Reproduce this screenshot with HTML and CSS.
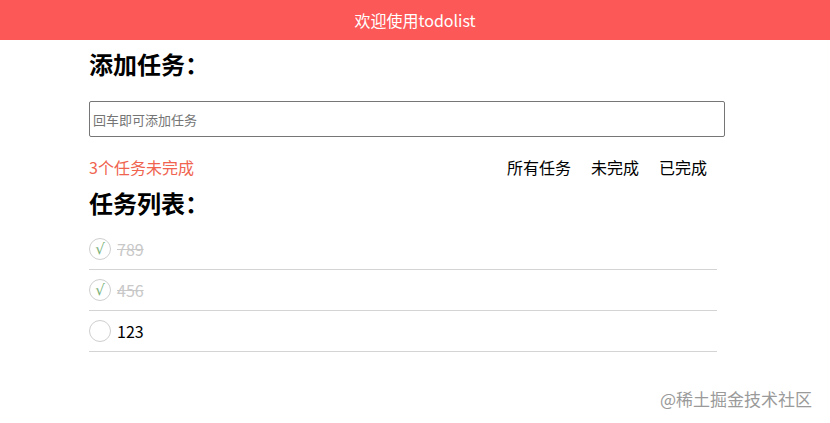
FILE: index.html
```html
<!DOCTYPE html>
<html lang="zh">
<head>
<meta charset="utf-8">
<link rel="stylesheet" href="styles.css">
</head>
<body>
<header class="topbar">欢迎使用todolist</header>
<main class="wrap">
  <h2 class="title title-add">添加任务：</h2>
  <input class="task-input" type="text" placeholder="回车即可添加任务">
  <div class="status">
    <span class="remain">3个任务未完成</span>
    <nav class="filters">
      <span class="filter">所有任务</span>
      <span class="filter">未完成</span>
      <span class="filter">已完成</span>
    </nav>
  </div>
  <h2 class="title title-list">任务列表：</h2>
  <ul class="list">
    <li class="item done"><span class="check">√</span><span class="text">789</span></li>
    <li class="item done"><span class="check">√</span><span class="text">456</span></li>
    <li class="item"><span class="check"></span><span class="text">123</span></li>
  </ul>
</main>
<div class="watermark">@稀土掘金技术社区</div>
</body>
</html>
```
FILE: styles.css
```css
* { box-sizing: border-box; }
html, body { margin: 0; padding: 0; }
body {
  font-family: "Noto Sans CJK SC", "Noto Sans", sans-serif;
  color: #000;
  background: #fff;
  width: 830px;
  height: 423px;
  position: relative;
  overflow: hidden;
}
.topbar {
  height: 40px;
  background: #fc5857;
  color: #fff;
  font-size: 16px;
  line-height: 40px;
  text-align: center;
}
.wrap {
  width: 636px;
  margin-left: 89px;
  display: flex;
  flex-direction: column;
}
.title {
  margin: 0;
  font-size: 24px;
  font-weight: bold;
  line-height: 30px;
}
.title-add { margin-top: 9px; }
.task-input {
  margin-top: 22px;
  width: 636px;
  height: 36px;
  border: 1px solid #767676;
  border-radius: 2px;
  padding: 0 3px;
  font-family: "Noto Sans CJK SC", sans-serif;
  font-size: 13px;
  outline: none;
}
.task-input::placeholder { color: #757575; }
.status {
  margin-top: 18px;
  display: flex;
  justify-content: space-between;
  align-items: center;
  font-size: 16px;
  line-height: 24px;
  padding-right: 18px;
}
.remain { color: #f0644f; }
.filters { display: flex; gap: 20px; }
.filter { color: #000; }
.title-list { margin-top: 9px; }
.list {
  list-style: none;
  margin: 11px 0 0;
  padding: 0;
  width: 628px;
}
.item {
  display: flex;
  align-items: center;
  gap: 6px;
  height: 41px;
  border-bottom: 1px solid #d4d4d4;
  font-size: 16px;
}
.check {
  width: 22px;
  height: 22px;
  border: 1px solid #cfcfcf;
  border-radius: 50%;
  display: flex;
  align-items: center;
  justify-content: center;
  color: #7ab27a;
  font-family: "DejaVu Sans", sans-serif;
  font-size: 15px;
  line-height: 1;
}
.done .text {
  color: #c8c8c8;
  text-decoration: line-through;
}
.watermark {
  position: absolute;
  right: 18px;
  bottom: 12px;
  font-size: 17px;
  color: #9a9a9a;
}
```
